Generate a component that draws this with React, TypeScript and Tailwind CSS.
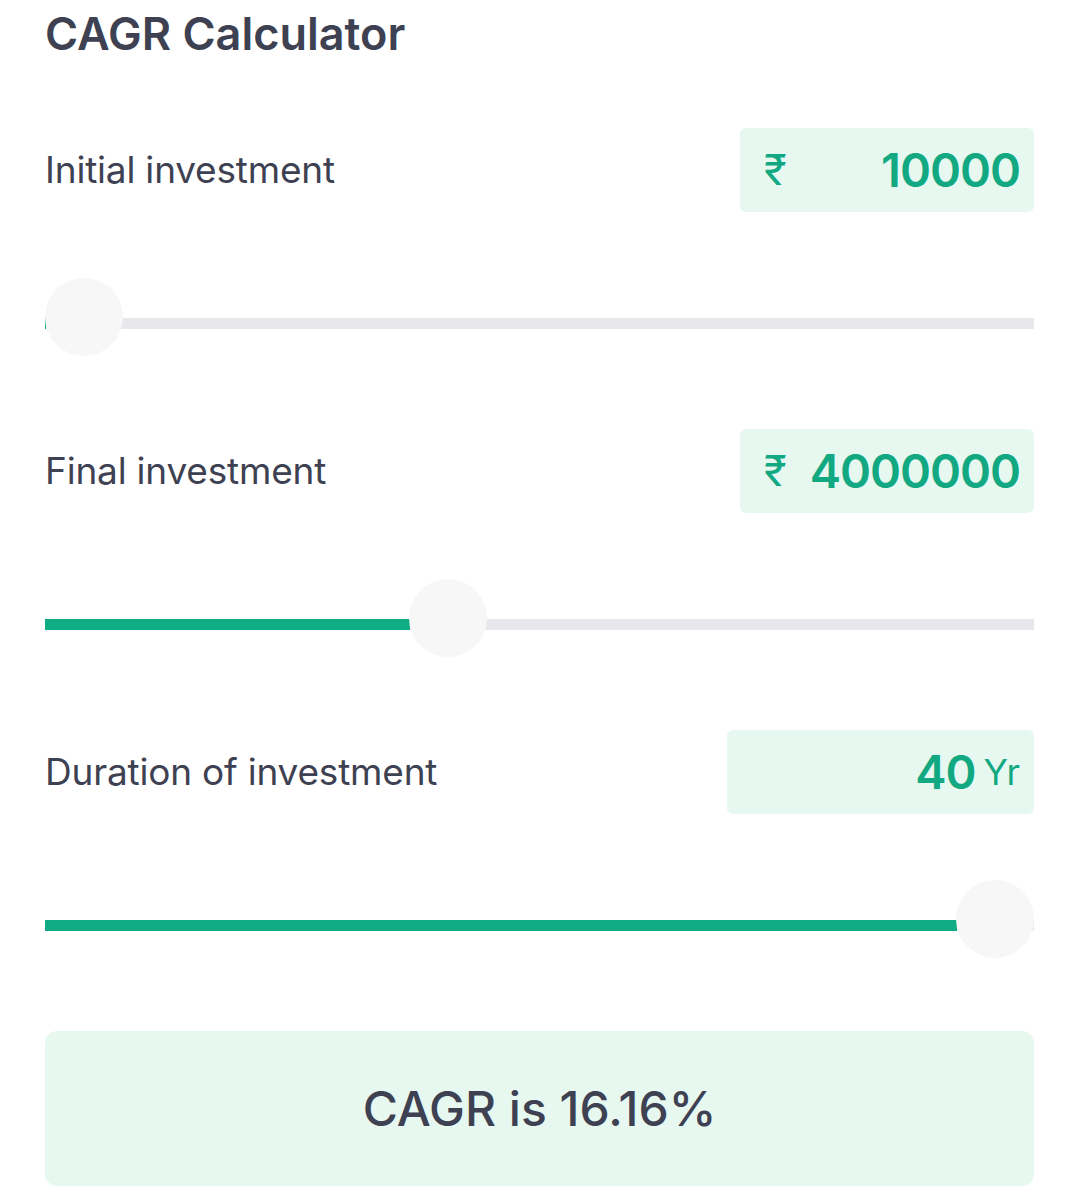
import React from 'react';

const font = { fontFamily: 'Inter, "Noto Sans", "DejaVu Sans", sans-serif' };

function Slider({ pct }: { pct: number }) {
  return (
    <div className="h-[217px] pt-[5px] flex items-center">
      <div className="relative w-full h-[11px] bg-[#e8e8ec]">
        <div className="h-full bg-[#10ad85]" style={{ width: `calc((100% - 78px) * ${pct} + 1px)` }} />
        <div
          className="absolute top-[-40px] w-[78px] h-[78px] rounded-full bg-[#f7f7f7]"
          style={{ left: `calc((100% - 78px) * ${pct})` }}
        />
      </div>
    </div>
  );
}

function Row({ label, children, wide }: { label: string; children: React.ReactNode; wide?: boolean }) {
  return (
    <div className="flex items-center justify-between">
      <span className="text-[37px] text-[#3d4152] tracking-[-0.2px]">{label}</span>
      <div
        className={`${wide ? 'w-[307px]' : 'w-[294px]'} h-[84px] rounded-md bg-[#e7f8f1] flex items-center pl-6 pr-[14px] text-[#12a982]`}
      >
        {children}
      </div>
    </div>
  );
}

export default function App() {
  return (
    <div className="bg-white min-h-[1199px] px-[45px] pt-[4px]" style={font}>
      <h1 className="text-[45px] font-semibold text-[#3d4152] leading-[60px] h-[124px]">CAGR Calculator</h1>

      <Row label="Initial investment">
        <span className="text-[42px] leading-none">₹</span>
        <span className="ml-auto text-[47px] font-semibold tracking-[-1px]">10000</span>
      </Row>
      <Slider pct={0} />

      <Row label="Final investment">
        <span className="text-[42px] leading-none">₹</span>
        <span className="ml-auto text-[47px] font-semibold tracking-[-1px]">4000000</span>
      </Row>
      <Slider pct={0.4} />

      <Row label="Duration of investment" wide>
        <span className="ml-auto text-[47px] font-semibold tracking-[-1px]">40</span>
        <span className="ml-2 text-[36px]">Yr</span>
      </Row>
      <Slider pct={1} />

      <div className="h-[155px] rounded-xl bg-[#e7f8f1] flex items-center justify-center">
        <span className="text-[48px] font-medium text-[#3d4152]">CAGR is 16.16%</span>
      </div>
    </div>
  );
}
